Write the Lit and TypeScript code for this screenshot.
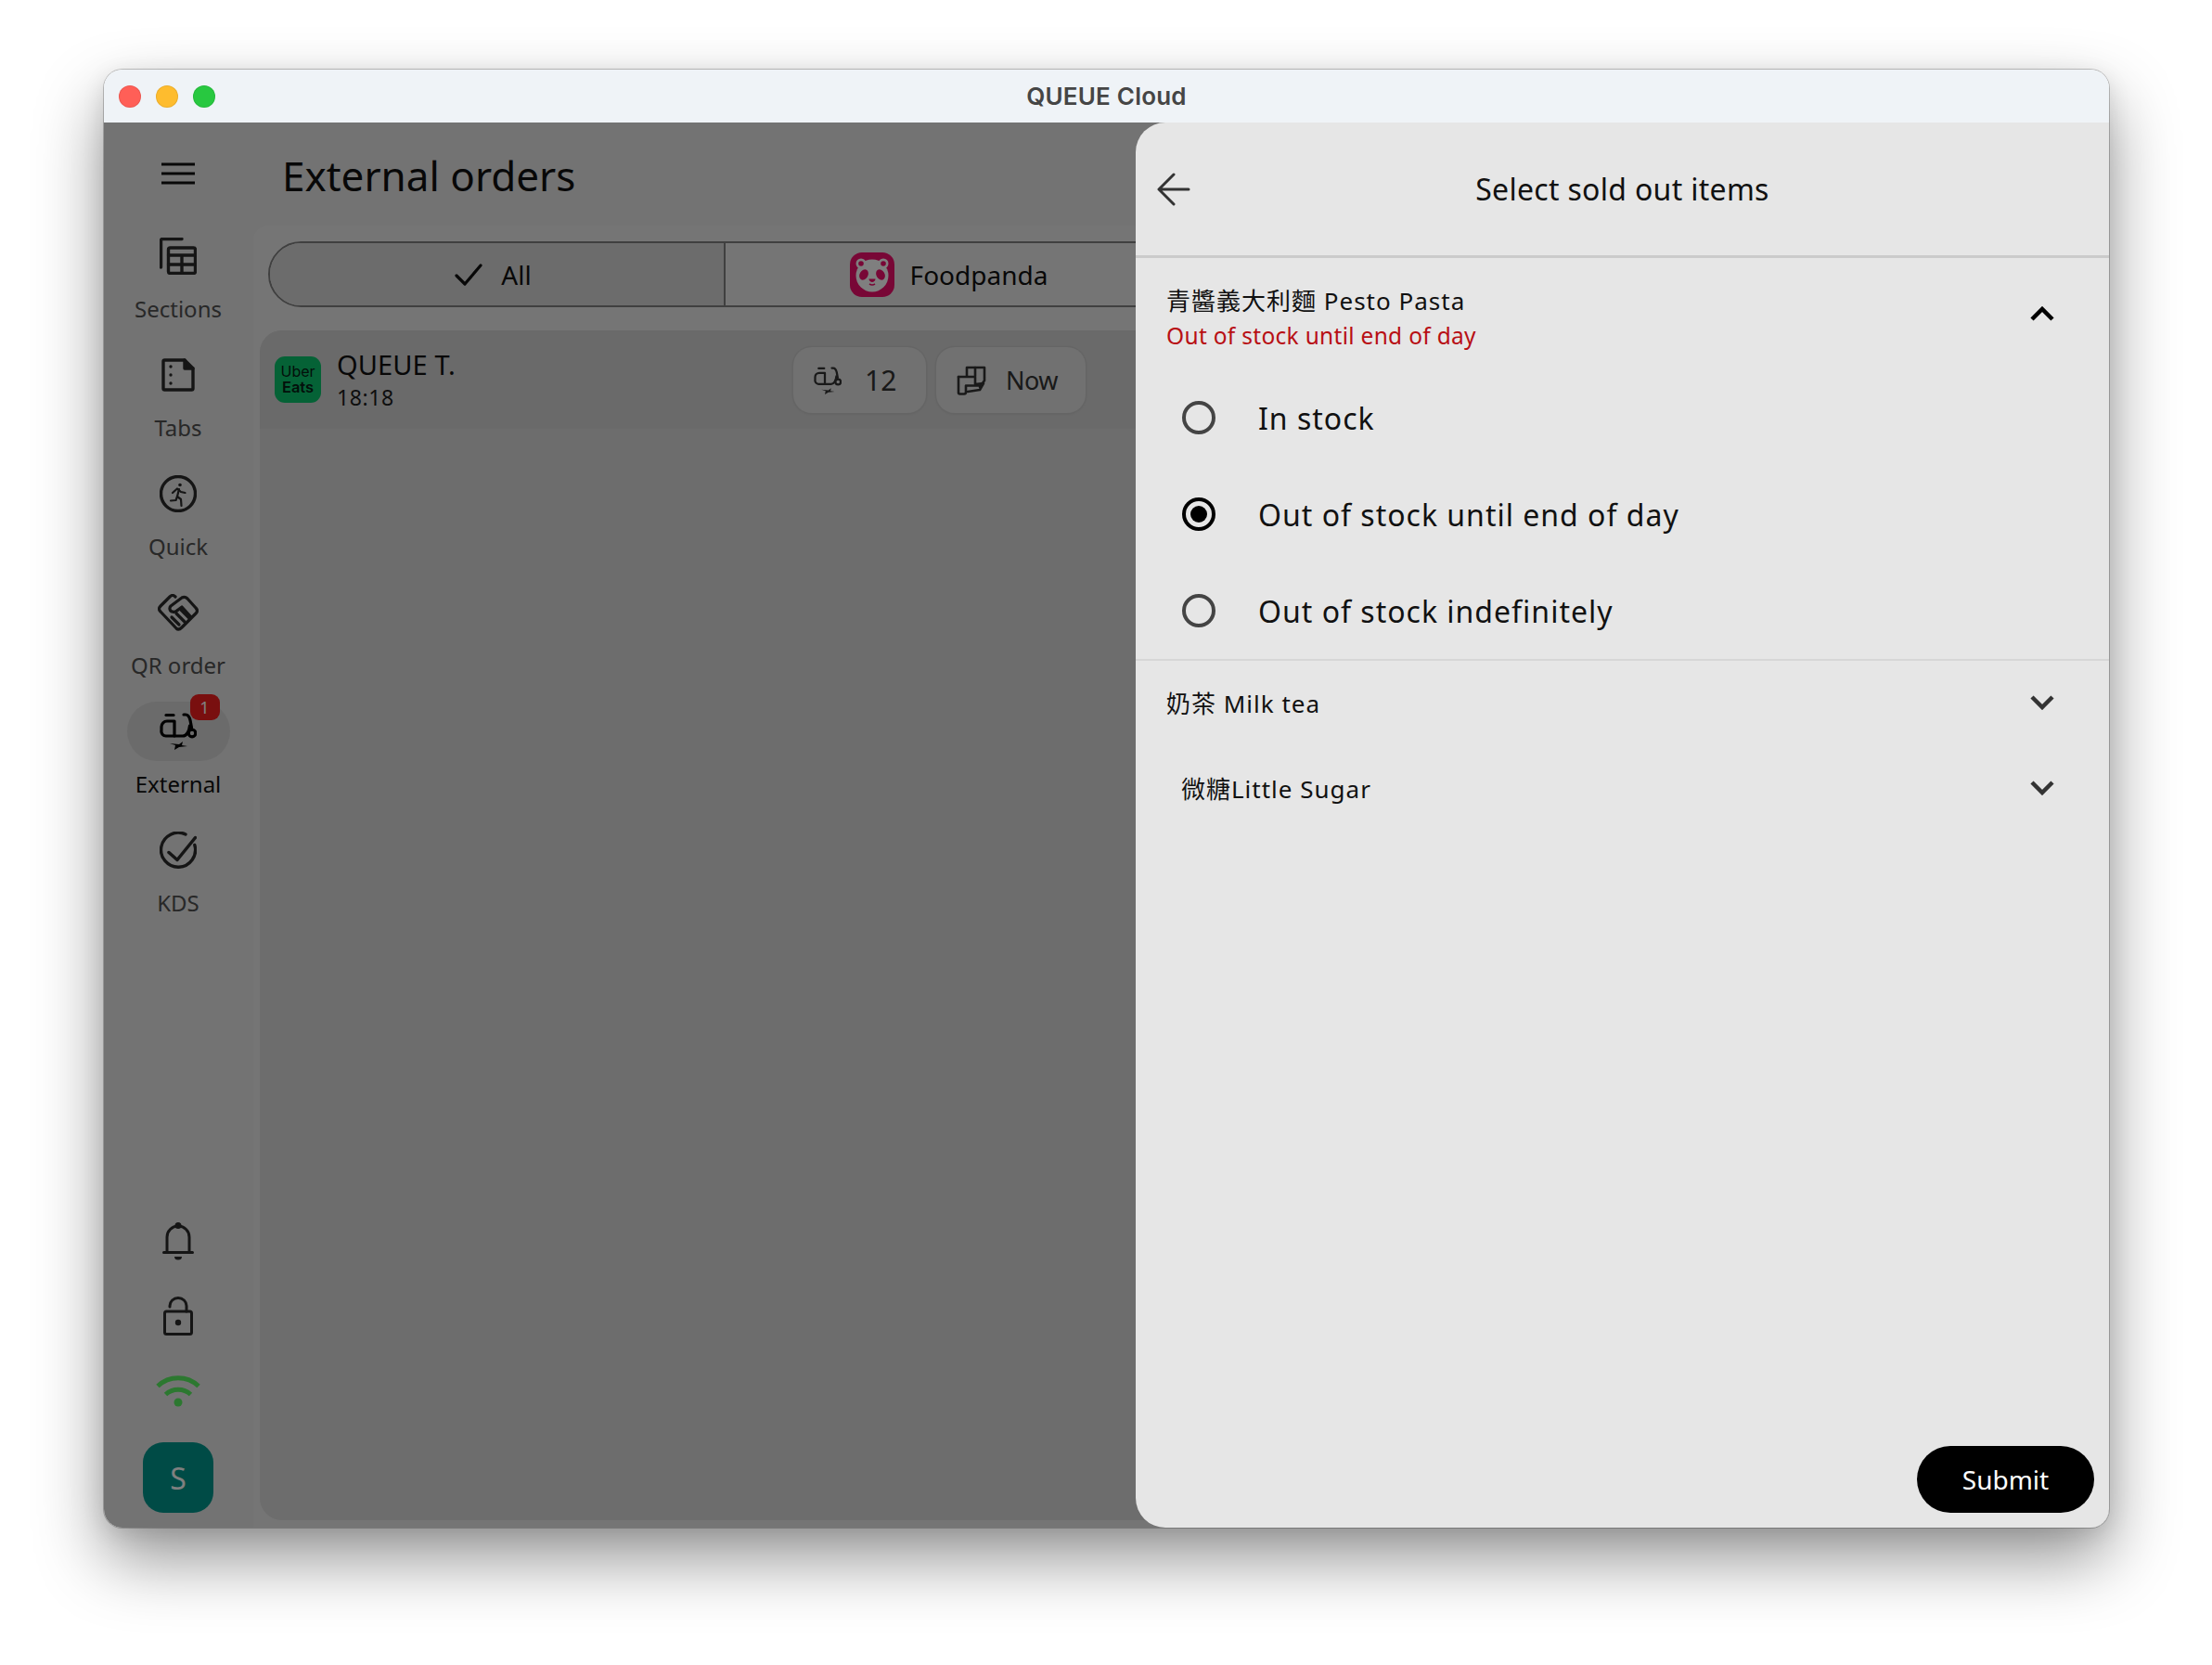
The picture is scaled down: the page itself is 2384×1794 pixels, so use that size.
import { LitElement, html, css, svg } from 'lit';
import { customElement } from 'lit/decorators.js';

const line = (w: number, h: number, body: unknown, sw = 3) => html`<svg
  width=${w} height=${h} viewBox="0 0 ${w} ${h}" fill="none" stroke="currentColor"
  stroke-width=${sw} stroke-linecap="round" stroke-linejoin="round">${body}</svg>`;

const scooter = (size: number, sw: number) => html`<svg width=${size} height=${size} viewBox="0 0 40 40"
  fill="none" stroke="currentColor" stroke-width=${sw} stroke-linecap="round" stroke-linejoin="round">
  <path d="M7 2.500h8" />
  <path d="M2 19v-4a6 6 0 0 1 6-6h8v16H7a5 5 0 0 1-5-6z" />
  <path d="M26 2h2c3 0 4 2 5 6l1.500 8" />
  <path d="M16 25h9c4 0 7-5 7.500-11" />
  <circle cx="35" cy="22" r="3.800" />
  <path d="M11 33l10 1 4-3-1 4 6 1-9 1-5 3 1-5z" fill="currentColor" stroke="none" />
</svg>`;

const chevron = (up: boolean) => html`<svg width="26" height="16" viewBox="0 0 26 16" fill="none"
  stroke="currentColor" stroke-width="4.500">
  <path d=${up ? 'M2 14L13 3l11 11' : 'M2 2l11 11L24 2'} />
</svg>`;

const ICONS = {
  sections: line(40, 40, svg`
    <path d="M1.500 32V3a1.500 1.500 0 0 1 1.500-1.500h21" />
    <rect x="9.500" y="11" width="29" height="27.500" rx="2" />
    <path d="M9.500 19h29M9.500 29h29M24 19v19.500" />`, 3.400),
  tabs: line(36, 36, svg`
    <path d="M2 3.500A1.500 1.500 0 0 1 3.500 2H25l9 9v21.500a1.500 1.500 0 0 1-1.500 1.500h-29A1.500 1.500 0 0 1 2 32.500z" />
    <path d="M25 2v9h9" fill="currentColor" />
    <path d="M10 9v.1M10 18v.1M10 27v.1" />`, 3.400),
  quick: line(40, 40, svg`
    <circle cx="20" cy="20" r="18.500" />
    <circle cx="22" cy="10.500" r="1.800" fill="currentColor" stroke="none" />
    <path d="M14 19l5-4.500 4 3.500 4.500 1" stroke-width="2.200" />
    <path d="M21 15l-2 8 4 3 .5 7" stroke-width="2.200" />
    <path d="M19 23l-1.500 4-5.500 .5" stroke-width="2.200" />`, 3.400),
  qr: line(44, 40, svg`
    <path d="M19 3C17 1 15 1 13 3L3 13C1 15 1 17 3 19L20 37C22 39 24 38 26 36L41 21C43 19 43 17 41 15L32 5C30 3 28 3 26 4L14 13C12 15 13 19 16 19C18 20 20 19 22 17L26 14L36 25" />
    <path d="M15 25l8 8M20 21l9 9M25 17l9 9" />`, 3.200),
  kds: line(40, 40, svg`
    <path d="M37.800 14.500A18.500 18.500 0 1 1 28 3" />
    <path d="M10 22.500l9 8L38.500 6.500" stroke-width="3.500" />`, 3.400),
  bell: line(34, 42, svg`
    <path d="M1.500 32.500h31" />
    <path d="M5 32.500V16a12 12 0 0 1 24 0v16.500" />
    <circle cx="17" cy="3.500" r="2" fill="currentColor" />
    <path d="M13 37h8a4 3.500 0 0 1-8 0z" fill="currentColor" stroke="none" />`),
  lock: line(32, 42, svg`
    <rect x="1.500" y="16" width="29" height="24.500" rx="2" />
    <path d="M7 11V10a9 8.500 0 0 1 18 0v6" />
    <circle cx="16" cy="28" r="3.200" fill="currentColor" stroke="none" />`),
  wifi: html`<svg width="48" height="36" viewBox="0 0 48 36" fill="none" stroke="currentColor" stroke-width="5">
    <path d="M2 13.500a32 32 0 0 1 44 0" />
    <path d="M10.500 22.500a20 20 0 0 1 27 0" />
    <circle cx="24" cy="31" r="4.500" fill="currentColor" stroke="none" />
  </svg>`,
  bag: line(32, 32, svg`
    <path d="M11 11V2h19v14l-5 7" />
    <path d="M20 2v9" />
    <path d="M2 12h18v8l9-1-4 7-13 2" />
    <path d="M2 12v17a1.500 1.500 0 0 0 1.500 1.500H8a2 2 0 0 0 2-2v-7h15" />`, 2.600),
  panda: html`<svg width="48" height="48" viewBox="0 0 48 48">
    <rect width="48" height="48" rx="13" fill="#f00f6c" />
    <circle cx="12" cy="12" r="5.500" fill="#fff" />
    <circle cx="36" cy="12" r="5.500" fill="#fff" />
    <circle cx="24" cy="25" r="17.500" fill="#fff" />
    <circle cx="12" cy="12" r="2.800" fill="#f00f6c" />
    <circle cx="36" cy="12" r="2.800" fill="#f00f6c" />
    <ellipse cx="15" cy="24" rx="4.500" ry="6" transform="rotate(30 15 24)" fill="#f00f6c" />
    <ellipse cx="33" cy="24" rx="4.500" ry="6" transform="rotate(-30 33 24)" fill="#f00f6c" />
    <path d="M20.500 28.500h7c0 2-2 3.500-3.500 3.500s-3.500-1.500-3.500-3.500z" fill="#f00f6c" />
    <path d="M21 34q3 2 6 0" stroke="#f00f6c" stroke-width="1.600" fill="none" />
  </svg>`,
};

const NAV = [
  { label: 'Sections', icon: ICONS.sections },
  { label: 'Tabs', icon: ICONS.tabs },
  { label: 'Quick', icon: ICONS.quick },
  { label: 'QR order', icon: ICONS.qr },
  { label: 'External', icon: scooter(40, 3.200), active: true, badge: '1' },
  { label: 'KDS', icon: ICONS.kds },
];

const OPTIONS = [
  { label: 'In stock' },
  { label: 'Out of stock until end of day', on: true },
  { label: 'Out of stock indefinitely' },
];

@customElement('app-root')
export class AppRoot extends LitElement {
  static styles = css`
    :host {
      display: block;
      width: 2384px;
      height: 1794px;
      background: #fff;
      overflow: hidden;
      font-family: "Noto Sans", "Noto Sans CJK TC", sans-serif;
      color: #111;
    }
    * { box-sizing: border-box; }

    .window {
      position: relative;
      display: flex;
      flex-direction: column;
      width: 2161px;
      height: 1571px;
      margin: 75px 0 0 112px;
      border-radius: 20px;
      overflow: hidden;
    }
    .frame {
      position: absolute;
      width: 2161px;
      height: 1571px;
      margin: 75px 0 0 112px;
      border-radius: 20px;
      box-shadow: 0 0 0 1px rgba(0, 0, 0, .22), 0 34px 72px rgba(0, 0, 0, .42), 0 6px 24px rgba(0, 0, 0, .1);
    }

    .titlebar {
      display: grid;
      grid-template-columns: 1fr auto 1fr;
      align-items: center;
      height: 57px;
      flex: none;
      padding: 0 16px;
      background: #eff3f7;
    }
    .lights { display: flex; gap: 16px; }
    .lights i { width: 24px; height: 24px; border-radius: 50%; box-shadow: inset 0 0 0 1px rgba(0, 0, 0, .08); }
    .lights .r { background: #ff5f57; }
    .lights .y { background: #febc2e; }
    .lights .g { background: #28c840; }
    .app-title {
      font-family: Inter, "Liberation Sans", sans-serif;
      font-size: 26px;
      font-weight: 600;
      letter-spacing: .2px;
      color: #454545;
    }

    .content { position: relative; flex: 1; display: flex; min-height: 0; }

    .rail {
      width: 161px;
      flex: none;
      display: flex;
      flex-direction: column;
      align-items: center;
      padding-right: 1px;
      background: #e6e6e6;
    }
    .burger { height: 112px; padding-top: 43px; }
    .burger svg { display: block; }
    .nav {
      height: 128px;
      width: 100%;
      display: flex;
      flex-direction: column;
      align-items: center;
      font-size: 24px;
      line-height: 34px;
      color: #505050;
    }
    .nav.active { color: #111; }
    .pill {
      position: relative;
      width: 111px;
      height: 64px;
      margin-bottom: 8px;
      border-radius: 32px;
      display: flex;
      align-items: center;
      justify-content: center;
      color: #2a2a2a;
    }
    .nav.active .pill { background: #d6d6d6; color: #000; }
    .badge {
      position: absolute;
      left: 68px;
      top: -8px;
      width: 32px;
      height: 28px;
      border-radius: 9px;
      background: #f21f1f;
      color: #fff;
      font-size: 18px;
      line-height: 28px;
      text-align: center;
    }
    .rail-foot {
      margin-top: auto;
      display: flex;
      flex-direction: column;
      align-items: center;
      color: #2a2a2a;
      padding-bottom: 16px;
    }
    .rail-foot span { height: 80px; display: flex; align-items: center; }
    .rail-foot .wifi { color: #58f060; }
    .avatar {
      width: 76px;
      height: 76px;
      margin-top: 16px;
      border-radius: 22px;
      background: #00968c;
      color: #fff;
      font-size: 32px;
      display: flex;
      align-items: center;
      justify-content: center;
    }

    .main { flex: 1; min-width: 0; display: flex; flex-direction: column; background: #e6e6e6; }
    .main h1 {
      height: 111px;
      margin: 0;
      padding: 3px 0 0 31px;
      display: flex;
      align-items: center;
      font-size: 44px;
      font-weight: 400;
    }
    .stage {
      flex: 1;
      min-height: 0;
      display: flex;
      flex-direction: column;
      gap: 25px;
      padding: 17px 0 8px 7px;
      background: #ebebeb;
      border-radius: 16px 0 0 0;
    }
    .segments {
      display: flex;
      flex: none;
      height: 71px;
      margin: 0 16px 0 9px;
      border: 2.500px solid #808080;
      border-radius: 36px;
      overflow: hidden;
      font-size: 28px;
    }
    .seg {
      width: 491px;
      display: flex;
      align-items: center;
      justify-content: center;
      gap: 17px;
      padding-right: 8px;
      border-right: 2px solid #808080;
    }
    .seg.on { background: #d8d8d8; gap: 20px; }
    .seg.rest { flex: 1; border-right: 0; }
    .list { flex: 1; border-radius: 24px 0 0 24px; background: #dadada; overflow: hidden; }
    .order {
      display: flex;
      align-items: center;
      height: 106px;
      padding-left: 16px;
      background: #d4d4d4;
    }
    .uber {
      width: 50px;
      height: 50px;
      flex: none;
      border-radius: 11px;
      background: #0bc56c;
      color: #062014;
      font-family: Inter, "Liberation Sans", sans-serif;
      font-size: 16px;
      line-height: 17px;
      display: flex;
      flex-direction: column;
      align-items: center;
      justify-content: center;
    }
    .uber b { font-size: 16.500px; font-weight: 600; }
    .who { width: 509px; padding-left: 17px; }
    .who div { font-size: 29px; line-height: 38px; letter-spacing: .1px; }
    .who small { display: block; font-size: 23px; line-height: 32px; letter-spacing: .6px; color: #1c1c1c; }
    .chips { display: flex; gap: 11px; margin-top: 1px; }
    .chip {
      height: 71px;
      display: flex;
      align-items: center;
      padding-left: 22px;
      border-radius: 20px;
      background: #e2e2e2;
      box-shadow: 0 0 0 1.500px #cbcbcb, 0 1px 3px rgba(0, 0, 0, .08);
      color: #333;
      font-size: 30px;
    }
    .chip.ride { width: 143px; gap: 25px; }
    .chip.when { width: 161px; gap: 21px; font-size: 27px; letter-spacing: -.5px; }

    .scrim { position: absolute; inset: 0; background: rgba(0, 0, 0, .5); }

    .panel {
      position: absolute;
      top: 0;
      right: 0;
      bottom: 0;
      width: 1049px;
      display: flex;
      flex-direction: column;
      background: #e6e6e6;
      border-radius: 32px 0 0 32px;
    }
    .panel-head {
      height: 146px;
      flex: none;
      display: grid;
      grid-template-columns: 1fr auto 1fr;
      align-items: center;
      padding: 0 23px;
      border-bottom: 3.500px solid #cbcbcb;
    }
    .panel-head svg { display: block; color: #333; }
    .panel-head h2 { margin: 0; font-size: 32px; font-weight: 400; letter-spacing: .3px; }
    .row {
      display: flex;
      align-items: center;
      justify-content: space-between;
      padding: 0 59px 0 33px;
      font-size: 26px;
      letter-spacing: 1px;
    }
    .row svg { display: block; color: #333; }
    .row.open { height: 120px; }
    .row.open svg { color: #000; }
    .row-text { padding-top: 9px; }
    .row-text div { line-height: 37px; }
    .row-text small { display: block; font-size: 24.500px; line-height: 37px; letter-spacing: .3px; color: #b80f14; }
    .opts { border-bottom: 2px solid #d6d6d6; }
    .opt {
      height: 104px;
      display: flex;
      align-items: center;
      gap: 46px;
      padding-left: 50px;
      font-size: 32px;
      letter-spacing: 1px;
    }
    .radio {
      width: 36px;
      height: 36px;
      flex: none;
      border-radius: 50%;
      border: 4px solid #444;
      display: flex;
      align-items: center;
      justify-content: center;
    }
    .radio.on { border-color: #000; }
    .radio.on i { width: 18px; height: 18px; border-radius: 50%; background: #000; }
    .row.milk { height: 89px; }
    .row.sugar { height: 96px; padding-left: 49px; }
    .foot { margin-top: auto; display: flex; justify-content: flex-end; padding: 16px; }
    .submit {
      width: 191px;
      height: 72px;
      border: 0;
      border-radius: 36px;
      background: #000;
      color: #fff;
      font: 400 28px "Noto Sans", sans-serif;
    }
  `;

  render() {
    return html`
      <div class="frame"></div>
      <div class="window">
        <div class="titlebar">
          <div class="lights"><i class="r"></i><i class="y"></i><i class="g"></i></div>
          <div class="app-title">QUEUE Cloud</div>
        </div>
        <div class="content">
          <div class="rail">
            <div class="burger">${line(36, 24, svg`<path d="M0 2h36M0 12h36M0 22h36" />`)}</div>
            ${NAV.map((n) => html`
              <div class="nav ${n.active ? 'active' : ''}">
                <div class="pill">
                  ${n.icon}
                  ${n.badge ? html`<span class="badge">${n.badge}</span>` : ''}
                </div>
                ${n.label}
              </div>
            `)}
            <div class="rail-foot">
              <span>${ICONS.bell}</span>
              <span>${ICONS.lock}</span>
              <span class="wifi">${ICONS.wifi}</span>
              <div class="avatar">S</div>
            </div>
          </div>
          <div class="main">
            <h1>External orders</h1>
            <div class="stage">
              <div class="segments">
                <div class="seg on">
                  ${line(30, 26, svg`<path d="M2 14l9 9L28 3" />`, 3.200)}
                  All
                </div>
                <div class="seg">${ICONS.panda} Foodpanda</div>
                <div class="seg rest"></div>
              </div>
              <div class="list">
                <div class="order">
                  <div class="uber"><span>Uber</span><b>Eats</b></div>
                  <div class="who">
                    <div>QUEUE T.</div>
                    <small>18:18</small>
                  </div>
                  <div class="chips">
                    <div class="chip ride">${scooter(30, 3)} 12</div>
                    <div class="chip when">${ICONS.bag} Now</div>
                  </div>
                </div>
              </div>
            </div>
          </div>
          <div class="scrim"></div>
          <div class="panel">
            <div class="panel-head">
              ${line(36, 36, svg`<path d="M34 18H3M18 2L2 18l16 16" />`, 3)}
              <h2>Select sold out items</h2>
            </div>
            <div class="row open">
              <div class="row-text">
                <div>青醬義大利麵 Pesto Pasta</div>
                <small>Out of stock until end of day</small>
              </div>
              ${chevron(true)}
            </div>
            <div class="opts">
              ${OPTIONS.map((o) => html`
                <div class="opt">
                  <span class="radio ${o.on ? 'on' : ''}">${o.on ? html`<i></i>` : ''}</span>
                  ${o.label}
                </div>
              `)}
            </div>
            <div class="row milk"><span>奶茶 Milk tea</span>${chevron(false)}</div>
            <div class="row sugar"><span>微糖Little Sugar</span>${chevron(false)}</div>
            <div class="foot"><button class="submit">Submit</button></div>
          </div>
        </div>
      </div>
    `;
  }
}
